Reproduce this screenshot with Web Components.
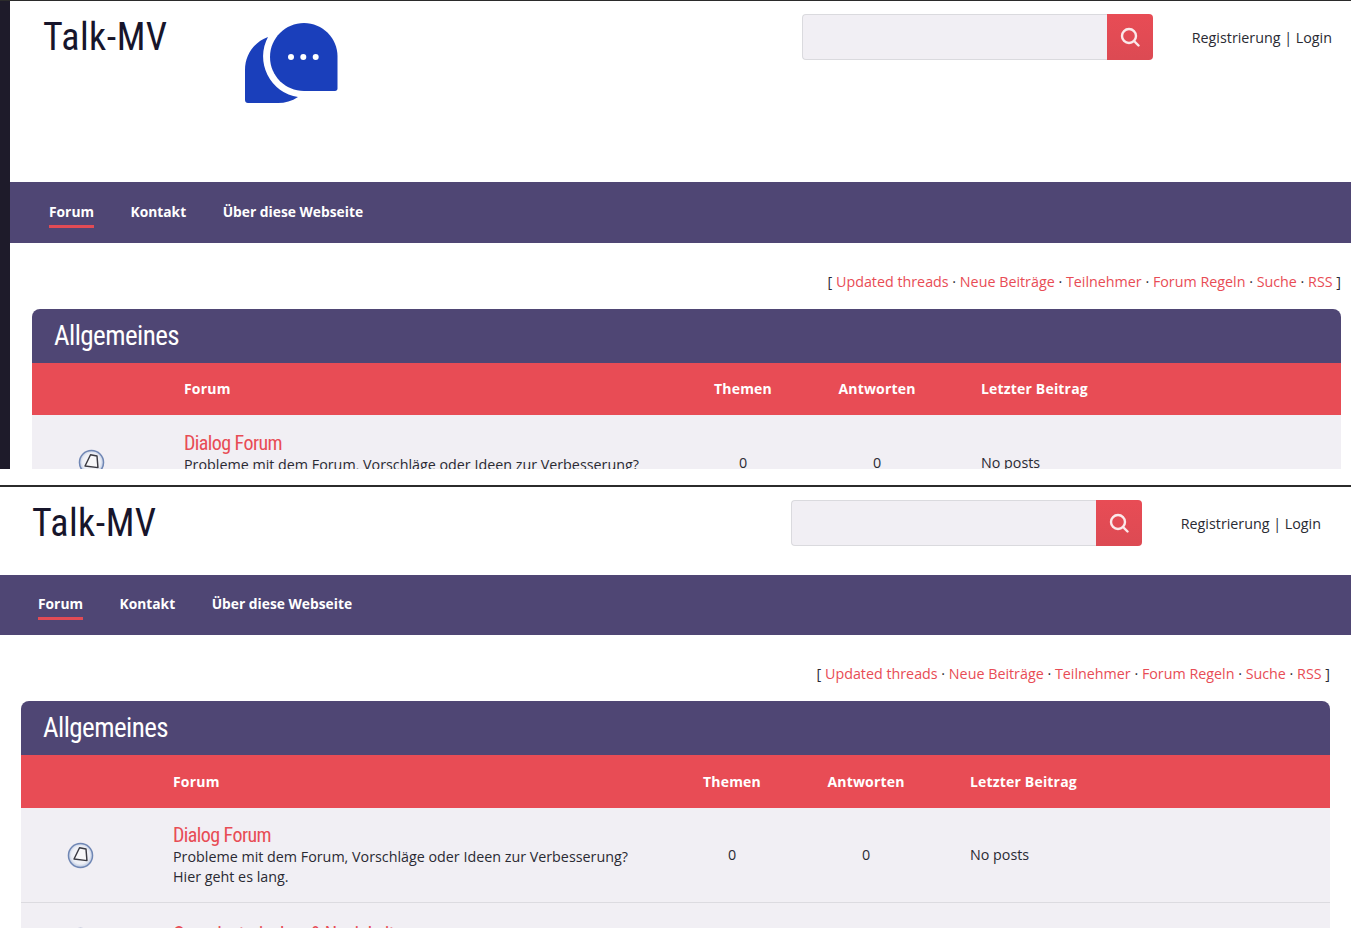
<!DOCTYPE html>
<html lang="de"><head><meta charset="utf-8"><title>Talk-MV</title>
<style>
html,body{margin:0;padding:0;background:#fff;}
body{width:1351px;height:933px;overflow:hidden;font:14px/21px "Open Sans",sans-serif;color:#2a2a33;}
</style></head><body>
<template id="t-shot"><style>
:host{display:flex;overflow:hidden;box-sizing:border-box;}
:host([kind=top]){height:469px;border-top:1px solid #2b2b2b;}
:host([kind=bottom]){height:443px;margin-top:16px;border-top:2px solid #2b2b2b;}
.bar{flex:none;width:10px;background:#1e1b2a;display:none;}
:host([kind=top]) .bar{display:block;}
.main{flex:1;min-width:0;}
</style><div class="bar"></div><div class="main"><slot></slot></div></template>

<template id="t-head"><style>
:host{display:flex;align-items:flex-start;box-sizing:border-box;height:var(--head-h);padding:var(--head-top) calc(var(--pad-r) + 9px) 0 var(--pad-l);}
.title{font:38px/44px "Liberation Sans Narrow","Roboto Condensed",Roboto,sans-serif;color:#17152b;flex:none;box-sizing:border-box;width:213px;padding-left:11px;margin-top:1px;letter-spacing:.5px;}
.right{margin-left:auto;display:flex;align-items:flex-start;}
.gap{flex:1;}
.links{margin-left:39px;font-size:14.3px;line-height:48px;white-space:nowrap;color:#2a2a33;}
</style><div class="title">Talk-MV</div><slot name="logo"></slot><div class="gap"></div><div class="right"><search-box></search-box><div class="links">Registrierung | Login</div></div></template>

<template id="t-search"><style>
:host{display:flex;width:351px;height:46px;box-sizing:border-box;}
.i{flex:1;background:#f1eff4;border:1px solid #dadade;border-right:0;border-radius:4px 0 0 4px;}
.b{flex:none;width:46px;background:linear-gradient(#e84c55,#dc4a53);border-radius:0 4px 4px 0;display:flex;align-items:center;justify-content:center;}
svg{width:20px;height:20px;margin:-1px 0 0 0;}
</style><div class="i"></div><div class="b"><svg viewBox="0 0 20 20" fill="none" stroke="#fff" stroke-width="2.4" stroke-linecap="round" opacity=".88"><circle cx="9" cy="9" r="7"/><path d="M14.500 14.500l4 4"/></svg></div></template>

<template id="t-nav"><style>
:host{display:flex;box-sizing:border-box;height:var(--nav-h);background:#4f4674;padding-left:calc(var(--pad-l) + 17px);gap:36.5px;align-items:flex-start;}
</style><slot></slot></template>

<template id="t-navlink"><style>
:host{display:block;font:700 13.8px/20px "Open Sans",sans-serif;color:#fff;padding:var(--nav-text) 0 6px;white-space:nowrap;}
:host([active]) span{padding-bottom:3px;border-bottom:3px solid #e14b55;}
span{display:block;}
</style><span><slot></slot></span></template>

<template id="t-toplinks"><style>
:host{display:block;text-align:right;padding:var(--links-top) var(--pad-r) 0 0;height:var(--links-h);box-sizing:border-box;font:14.3px/21px "Open Sans",sans-serif;color:#2a2a33;white-space:nowrap;}
::slotted(a){color:#e84c55;text-decoration:none;}
</style><slot></slot></template>

<template id="t-card"><style>
:host{display:block;margin:0 var(--pad-r) 0 var(--pad-l);}
.h{height:54px;background:#4f4674;border-radius:8px 8px 0 0;color:#fff;font:27px/54px "Liberation Sans Narrow","Roboto Condensed",Roboto,sans-serif;letter-spacing:-.55px;padding-left:22px;}
</style><div class="h"><slot name="title"></slot></div><slot></slot></template>

<template id="t-cols"><style>
:host{display:grid;grid-template-columns:152px 492px 134px 134px 1fr;align-items:center;height:var(--cols-h);background:#e84c55;color:#fff;font:700 14px/20px "Open Sans",sans-serif;letter-spacing:.18px;}
.c{text-align:center;}.l{padding-left:37px;}
</style><div></div><div>Forum</div><div class="c">Themen</div><div class="c">Antworten</div><div class="l">Letzter Beitrag</div></template>

<template id="t-row"><style>
:host{display:grid;grid-template-columns:152px 492px 134px 134px 1fr;align-items:center;box-sizing:border-box;min-height:var(--row-h,0);background:#f1eff4;border-bottom:1px solid #dcdbe0;font:14.3px/20px "Open Sans",sans-serif;color:#2a2a33;}
.ic{width:118px;display:flex;justify-content:center;}
svg{width:27px;height:27px;display:block;}
.txt{align-self:start;padding:var(--row-top,16px) 0 var(--row-bottom,15px);}
.name{font:20px/23px "Liberation Sans Narrow","Roboto Condensed",Roboto,sans-serif;letter-spacing:-.58px;color:#e84c55;display:block;}
.c{text-align:center;padding:var(--val-pad,0);}.l{padding:var(--val-pad,0);padding-left:37px;}
</style>
<div class="ic"><svg viewBox="0 0 28 28"><defs><radialGradient id="g" cx=".5" cy=".48" r=".52"><stop offset="0" stop-color="#fbfbfd"/><stop offset=".72" stop-color="#eceef5"/><stop offset=".9" stop-color="#c6d0e4"/><stop offset="1" stop-color="#a9b8d6"/></radialGradient></defs><circle cx="14" cy="14" r="12.5" fill="url(#g)" stroke="#6f86b4" stroke-width="1.5"/><path d="M13 6l6.700 1.300 1 12-13.400-1.700z" fill="#f7f7f9" stroke="#3a3a42" stroke-width="1.500" stroke-linejoin="round"/></svg></div>
<div class="txt"><span class="name"><slot name="name"></slot></span><slot name="desc"></slot></div>
<div class="c"><slot name="t"></slot></div><div class="c"><slot name="a"></slot></div><div class="l"><slot name="last"></slot></div></template>

<script>
const def=(n,t)=>customElements.define(n,class extends HTMLElement{constructor(){super();this.attachShadow({mode:'open'}).appendChild(document.getElementById(t).content.cloneNode(true));}});
def('page-shot','t-shot');def('site-head','t-head');def('search-box','t-search');def('site-nav','t-nav');def('nav-link','t-navlink');def('top-links','t-toplinks');def('forum-card','t-card');def('forum-cols','t-cols');def('forum-row','t-row');
</script>

<page-shot kind="top" style="--pad-l:22px;--pad-r:10px;--head-h:181px;--head-top:13px;--nav-h:61px;--nav-text:20px;--links-top:28px;--links-h:66px;--cols-h:52px;">
<div>
<site-head><svg slot="logo" style="flex:none;width:93px;height:80px;margin-top:9px" viewBox="0 0 93 80"><path fill="#1a3fbb" d="M23 14C9 19 0 32 0 47v30c0 1.700 1.300 3 3 3h30c7 0 14-2 20-6A41 41 0 0 1 23 14z"/><path fill="#1a3fbb" d="M59 0C40.400 0 25 15 25 34s15.400 34 34 34h31c1.500 0 2.500-1 2.500-2.500V33.500C92.500 15 77.500 0 59 0z"/><g fill="#fff"><circle cx="46" cy="34" r="3"/><circle cx="58.300" cy="34" r="3"/><circle cx="70.700" cy="34" r="3"/></g></svg></site-head>
<site-nav><nav-link active>Forum</nav-link><nav-link>Kontakt</nav-link><nav-link>Über diese Webseite</nav-link></site-nav>
<top-links>[ <a>Updated threads</a> · <a>Neue Beiträge</a> · <a>Teilnehmer</a> · <a>Forum Regeln</a> · <a>Suche</a> · <a>RSS</a> ]</top-links>
<forum-card><span slot="title">Allgemeines</span><forum-cols></forum-cols>
<forum-row style="--row-h:95px;--row-top:17px;--val-pad:2px 0 0"><span slot="name">Dialog Forum</span><span slot="desc">Probleme mit dem Forum, Vorschläge oder Ideen zur Verbesserung?</span><span slot="t">0</span><span slot="a">0</span><span slot="last">No posts</span></forum-row></forum-card>
</div></page-shot>

<page-shot kind="bottom" style="--pad-l:21px;--pad-r:21px;--head-h:88px;--head-top:13px;--nav-h:60px;--nav-text:19px;--links-top:28px;--links-h:66px;--cols-h:53px;">
<div>
<site-head></site-head>
<site-nav><nav-link active>Forum</nav-link><nav-link>Kontakt</nav-link><nav-link>Über diese Webseite</nav-link></site-nav>
<top-links>[ <a>Updated threads</a> · <a>Neue Beiträge</a> · <a>Teilnehmer</a> · <a>Forum Regeln</a> · <a>Suche</a> · <a>RSS</a> ]</top-links>
<forum-card><span slot="title">Allgemeines</span><forum-cols></forum-cols>
<forum-row style="--row-h:95px;--row-top:16px"><span slot="name">Dialog Forum</span><span slot="desc">Probleme mit dem Forum, Vorschläge oder Ideen zur Verbesserung?<br>Hier geht es lang.</span><span slot="t">0</span><span slot="a">0</span><span slot="last">No posts</span></forum-row>
<forum-row style="--row-top:20px;--row-bottom:12px"><span slot="name">Organisatorisches &amp; Neuigkeiten</span><span slot="desc">&nbsp;</span></forum-row>
</forum-card>
</div></page-shot>
</body></html>
